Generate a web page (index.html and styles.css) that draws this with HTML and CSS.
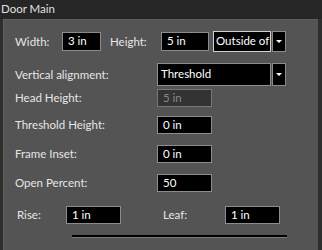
FILE: index.html
```html
<!DOCTYPE html>
<html>
<head>
<meta charset="utf-8">
<link rel="stylesheet" href="styles.css">
</head>
<body>
<div class="title">Door Main</div>
<div class="panel">
  <div class="row r1">
    <span class="lbl w-width">Width:</span>
    <div class="inp i-width">3 in</div>
    <span class="lbl w-height">Height:</span>
    <div class="inp i-height">5 in</div>
    <div class="combo c-side">
      <div class="combo-field focus">Outside of</div>
      <div class="combo-btn"><span class="tri"></span></div>
    </div>
  </div>
  <div class="row r2">
    <span class="lbl wide">Vertical alignment:</span>
    <div class="combo c-align">
      <div class="combo-field">Threshold</div>
      <div class="combo-btn"><span class="tri"></span></div>
    </div>
  </div>
  <div class="row r3">
    <span class="lbl wide">Head Height:</span>
    <div class="inp col disabled">5 in</div>
  </div>
  <div class="row r4">
    <span class="lbl wide">Threshold Height:</span>
    <div class="inp col">0 in</div>
  </div>
  <div class="row r5">
    <span class="lbl wide">Frame Inset:</span>
    <div class="inp col">0 in</div>
  </div>
  <div class="row r6">
    <span class="lbl wide">Open Percent:</span>
    <div class="inp col">50</div>
  </div>
  <div class="row r7">
    <span class="lbl w-rise">Rise:</span>
    <div class="inp i-rise">1 in</div>
    <span class="lbl w-leaf">Leaf:</span>
    <div class="inp i-leaf">1 in</div>
  </div>
  <div class="sep"></div>
</div>
</body>
</html>
```
FILE: styles.css
```css
html, body {
  margin: 0;
  padding: 0;
}
body {
  width: 322px;
  height: 250px;
  overflow: hidden;
  background: #2e2e2e;
  font-family: Lato, "Noto Sans", sans-serif;
  font-size: 11.5px;
  color: #e6e6e6;
}
.title {
  height: 19px;
  line-height: 18px;
  padding-left: 1px;
  background: #262626;
  color: #e0e0e0;
  font-size: 11.5px;
}
.panel {
  margin: 0 4px 0 3px;
  height: 231px;
  background: #545454;
  border-top: 1px solid #5e5e5e;
  border-left: 1px solid #5e5e5e;
  padding: 11px 0 0 11px;
  box-sizing: border-box;
}
.row {
  display: flex;
  align-items: center;
}
.lbl {
  white-space: nowrap;
  line-height: 16px;
}
.inp {
  box-sizing: border-box;
  height: 19px;
  border: 1px solid #8c8c8c;
  background: #000;
  color: #fff;
  line-height: 16px;
  padding-left: 5px;
  white-space: nowrap;
}
.r1 { height: 21px; }
.w-width { width: 47px; }
.i-width { width: 39px; }
.w-height { width: 51px; margin-left: 9px; }
.i-height { width: 48px; }
.combo {
  display: flex;
  box-sizing: border-box;
}
.c-side { margin-left: 4px; height: 21px; }
.combo-field {
  box-sizing: border-box;
  height: 100%;
  background: #000;
  color: #fff;
  border: 1px solid #8c8c8c;
  padding-left: 3px;
  line-height: 18px;
  overflow: hidden;
  white-space: nowrap;
}
.c-side .combo-field { width: 58px; border-color: #d0d0d0; padding-left: 2px; padding-right: 0; }
.combo-btn {
  box-sizing: border-box;
  width: 14px;
  height: 100%;
  background: #000;
  border: 1px solid #8c8c8c;
  margin-left: 1px;
  display: flex;
  align-items: center;
  justify-content: center;
}
.tri {
  width: 0;
  height: 0;
  border-left: 3px solid transparent;
  border-right: 3px solid transparent;
  border-top: 3px solid #fff;
}
.r2 { margin-top: 11px; height: 23px; }
.wide { width: 142px; }
.c-align { height: 23px; }
.c-align .combo-field { width: 114px; line-height: 20px; }
.col { width: 55px; height: 18px; }
.r3 { margin-top: 3px; height: 18px; }
.r4 { margin-top: 9px; height: 18px; }
.r5 { margin-top: 11px; height: 18px; }
.r6 { margin-top: 11px; height: 18px; }
.disabled {
  background: #333;
  border-color: #777;
  color: #8a8a8a;
}
.r7 { margin-top: 14px; height: 18px; }
.w-rise { width: 49px; padding-left: 2px; }
.i-rise { width: 55px; height: 18px; }
.w-leaf { width: 62px; margin-left: 42px; }
.i-leaf { width: 55px; height: 18px; }
.sep {
  margin: 11px 0 0 57px;
  width: 215px;
  height: 2px;
  background: #000;
  border-bottom: 1px solid #7a7a7a;
}
```
